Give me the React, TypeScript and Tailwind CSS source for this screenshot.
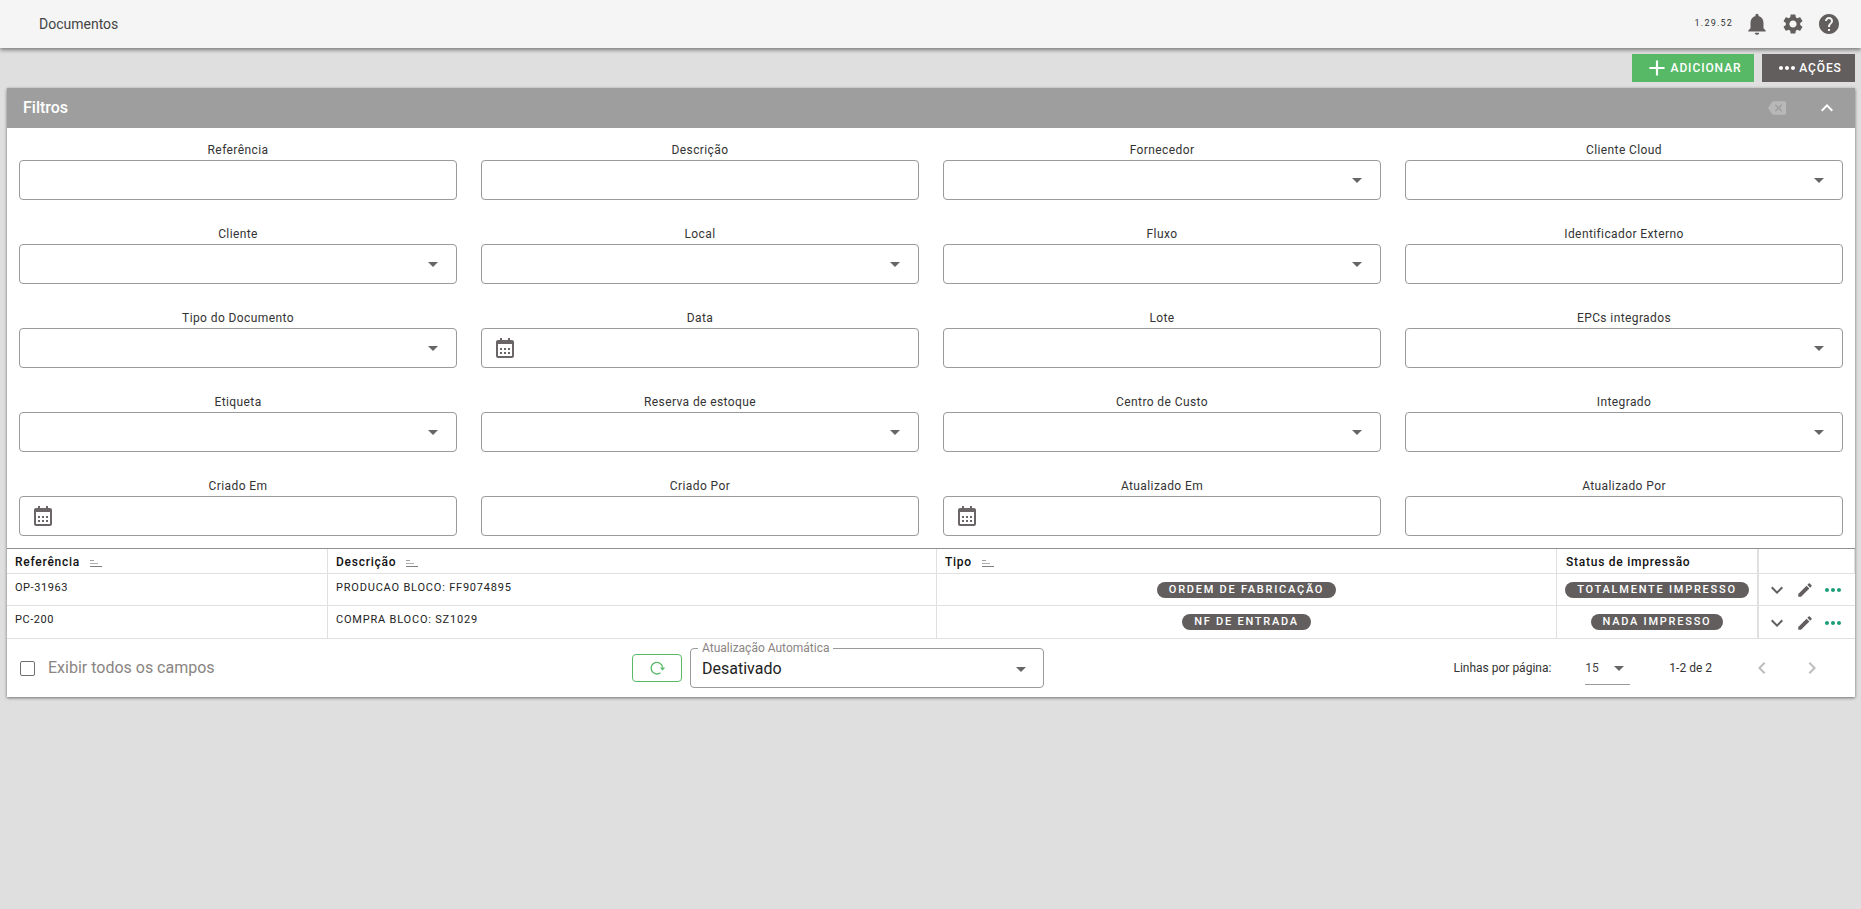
import React from "react";

const P = {
  bell: "M12 22c1.1 0 2-.9 2-2h-4c0 1.1.89 2 2 2zm6-6v-5c0-3.07-1.64-5.64-4.5-6.32V4c0-.83-.67-1.5-1.5-1.5s-1.5.67-1.5 1.5v.68C7.63 5.36 6 7.92 6 11v5l-2 2v1h16v-1l-2-2z",
  gear: "M19.14 12.94c.04-.3.06-.61.06-.94 0-.32-.02-.64-.07-.94l2.03-1.58c.18-.14.23-.41.12-.61l-1.92-3.32c-.12-.22-.37-.29-.59-.22l-2.39.96c-.5-.38-1.03-.7-1.62-.94l-.36-2.54c-.04-.24-.24-.41-.48-.41h-3.84c-.24 0-.43.17-.47.41l-.36 2.54c-.59.24-1.13.57-1.62.94l-2.39-.96c-.22-.08-.47 0-.59.22L2.74 8.87c-.12.21-.08.47.12.61l2.03 1.58c-.05.3-.09.63-.09.94s.02.64.07.94l-2.03 1.58c-.18.14-.23.41-.12.61l1.92 3.32c.12.22.37.29.59.22l2.39-.96c.5.38 1.03.7 1.62.94l.36 2.54c.05.24.24.41.48.41h3.84c.24 0 .44-.17.47-.41l.36-2.54c.59-.24 1.13-.56 1.62-.94l2.39.96c.22.08.47 0 .59-.22l1.92-3.32c.12-.22.07-.47-.12-.61l-2.01-1.58zM12 15.6c-1.98 0-3.6-1.62-3.6-3.6s1.62-3.6 3.6-3.6 3.6 1.62 3.6 3.6-1.62 3.6-3.6 3.6z",
  help: "M12 2C6.48 2 2 6.48 2 12s4.48 10 10 10 10-4.48 10-10S17.52 2 12 2zm1 17h-2v-2h2v2zm2.07-7.75l-.9.92C13.45 12.9 13 13.5 13 15h-2v-.5c0-1.1.45-2.1 1.17-2.83l1.24-1.26c.37-.36.59-.86.59-1.41 0-1.1-.9-2-2-2s-2 .9-2 2H8c0-2.21 1.79-4 4-4s4 1.79 4 4c0 .88-.36 1.68-.93 2.25z",
  plus: "M19 13h-6v6h-2v-6H5v-2h6V5h2v6h6v2z",
  more: "M6 10c-1.1 0-2 .9-2 2s.9 2 2 2 2-.9 2-2-.9-2-2-2zm12 0c-1.1 0-2 .9-2 2s.9 2 2 2 2-.9 2-2-.9-2-2-2zm-6 0c-1.1 0-2 .9-2 2s.9 2 2 2 2-.9 2-2-.9-2-2-2z",
  backspace: "M22 3H7c-.69 0-1.23.35-1.59.88L0 12l5.41 8.11c.36.53.9.89 1.59.89h15c1.1 0 2-.9 2-2V5c0-1.1-.9-2-2-2zm-3 12.59L17.59 17 14 13.41 10.41 17 9 15.59 12.59 12 9 8.41 10.41 7 14 10.59 17.59 7 19 8.41 15.41 12 19 15.59z",
  up: "M12 8l-6 6 1.41 1.41L12 10.83l4.59 4.58L18 14z",
  down: "M16.59 8.59L12 13.17 7.41 8.59 6 10l6 6 6-6z",
  left: "M15.41 7.41L14 6l-6 6 6 6 1.41-1.41L10.83 12z",
  right: "M10 6L8.59 7.41 13.17 12l-4.58 4.59L10 18l6-6z",
  edit: "M3 17.25V21h3.75L17.81 9.94l-3.75-3.75L3 17.25zM20.71 7.04c.39-.39.39-1.02 0-1.41l-2.34-2.34c-.39-.39-1.02-.39-1.41 0l-1.83 1.83 3.75 3.75 1.83-1.83z",
  caret: "M7 10l5 5 5-5z",
  calendar: "M7 12h2v2H7zm0 4h2v2H7zm4-4h2v2h-2zm0 4h2v2h-2zm4-4h2v2h-2zm0 4h2v2h-2zM5 22h14c1.103 0 2-.897 2-2V6c0-1.103-.897-2-2-2h-2V2h-2v2H9V2H7v2H5c-1.103 0-2 .897-2 2v14c0 1.103.897 2 2 2zM19 8l.001 12H5V8h14z",
};

function Icon({ d, className }: { d: string; className: string }) {
  return (
    <svg viewBox="0 0 24 24" className={className} fill="currentColor" aria-hidden="true">
      <path d={d} />
    </svg>
  );
}

type Field = { label: string; kind?: "select" | "date" };

const fields: Field[] = [
  { label: "Referência" },
  { label: "Descrição" },
  { label: "Fornecedor", kind: "select" },
  { label: "Cliente Cloud", kind: "select" },
  { label: "Cliente", kind: "select" },
  { label: "Local", kind: "select" },
  { label: "Fluxo", kind: "select" },
  { label: "Identificador Externo" },
  { label: "Tipo do Documento", kind: "select" },
  { label: "Data", kind: "date" },
  { label: "Lote" },
  { label: "EPCs integrados", kind: "select" },
  { label: "Etiqueta", kind: "select" },
  { label: "Reserva de estoque", kind: "select" },
  { label: "Centro de Custo", kind: "select" },
  { label: "Integrado", kind: "select" },
  { label: "Criado Em", kind: "date" },
  { label: "Criado Por" },
  { label: "Atualizado Em", kind: "date" },
  { label: "Atualizado Por" },
];

function FilterField({ label, kind }: Field) {
  return (
    <div className="flex flex-col h-[84px]">
      <div className="h-[20px] pt-[2px] text-center text-[12px] leading-[16px] tracking-[0.4px] text-[#333333]">{label}</div>
      <div className="h-[40px] rounded-[4px] border border-[#9a9a9a] bg-white flex items-center justify-between">
        {kind === "date" && <Icon d={P.calendar} className="ml-[11px] w-[24px] h-[24px] text-[#6b6567]" />}
        {kind === "select" && (
          <>
            <span />
            <Icon d={P.caret} className="mr-[11px] w-[24px] h-[24px] text-[#666666]" />
          </>
        )}
      </div>
    </div>
  );
}

function SortIcon() {
  return (
    <span className="ml-[10px] mt-[3px] flex flex-col gap-[2px] w-[12px]">
      <span className="block h-[1px] w-[4px] bg-[#a0a0a0]" />
      <span className="block h-[1px] w-[8px] bg-[#b0b0b0]" />
      <span className="block h-[1px] w-[12px] bg-[#808080]" />
    </span>
  );
}

function Badge({ children }: { children: React.ReactNode }) {
  return (
    <span className="inline-flex items-center h-[16px] rounded-full bg-[#625e5e] px-[12px] text-[11px] font-medium leading-[16px] tracking-[1.75px] text-white whitespace-nowrap">
      {children}
    </span>
  );
}

function Row({ ref_, desc, tipo, status, last }: { ref_: string; desc: string; tipo: string; status: string; last?: boolean }) {
  return (
    <div className={`flex border-b border-[#e0e0e0] ${last ? "h-[33px]" : "h-[32px]"}`}>
      <div className="w-[321px] shrink-0 border-r border-[#e0e0e0] pl-[8px] pt-[6px] text-[11px] leading-[16px] tracking-[0.55px] text-[#222222]">{ref_}</div>
      <div className="w-[609px] shrink-0 border-r border-[#e0e0e0] pl-[8px] pt-[6px] text-[11px] leading-[16px] tracking-[0.8px] text-[#222222]">{desc}</div>
      <div className="w-[620px] shrink-0 border-r border-[#e0e0e0] flex justify-center pt-[8px]"><Badge>{tipo}</Badge></div>
      <div className="w-[202px] shrink-0 border-r-2 border-[#e0e0e0] flex justify-center pt-[8px]"><Badge>{status}</Badge></div>
      <div className="flex-1 flex items-center pl-[4px] pt-[1px]">
        <span className="w-[28px] flex justify-center"><Icon d={P.down} className="w-[24px] h-[24px] shrink-0 text-[#625e5e]" /></span>
        <span className="w-[28px] flex justify-center"><Icon d={P.edit} className="w-[18px] h-[18px] shrink-0 text-[#625e5e]" /></span>
        <span className="w-[28px] flex justify-center"><Icon d={P.more} className="w-[24px] h-[24px] shrink-0 text-[#1e9e78]" /></span>
      </div>
    </div>
  );
}

export default function App() {
  return (
    <div className="min-h-[909px] bg-[#dfdfdf] font-['Roboto',sans-serif]">
      <header className="h-[48px] bg-[#f5f5f5] shadow-[0_2px_4px_rgba(0,0,0,0.45)] flex items-center justify-between pl-[39px] pr-[20px]">
        <span className="text-[14px] text-[#444444]">Documentos</span>
        <div className="flex items-center">
          <span className="mr-[11px] text-[9px] tracking-[1.2px] text-[#333333]">1.29.52</span>
          <Icon d={P.bell} className="w-[26px] h-[26px] text-[#625e5e]" />
          <Icon d={P.gear} className="ml-[11px] w-[24px] h-[24px] text-[#625e5e]" />
          <Icon d={P.help} className="ml-[12px] w-[24px] h-[24px] text-[#625e5e]" />
        </div>
      </header>

      <div className="flex justify-end gap-[8px] pt-[6px] pr-[6px] h-[40px]">
        <button className="w-[122px] h-[28px] bg-[#57b966] text-white flex items-center justify-center text-[12px] font-medium tracking-[0.9px]">
          <Icon d={P.plus} className="w-[26px] h-[26px] -ml-[1px] mr-[1px]" />
          ADICIONAR
        </button>
        <button className="w-[93px] h-[28px] bg-[#625e5e] text-white flex items-center justify-center text-[12px] font-medium tracking-[0.9px]">
          <Icon d={P.more} className="w-[24px] h-[24px]" />
          AÇÕES
        </button>
      </div>

      <main className="ml-[7px] mr-[6px] bg-white shadow-[0_1px_3px_rgba(0,0,0,0.5)]">
        <div className="h-[40px] bg-[#9e9e9e] flex items-center justify-between pl-[16px] pr-[16px]">
          <span className="text-[16px] font-medium text-white">Filtros</span>
          <div className="flex items-center">
            <Icon d={P.backspace} className="w-[18px] h-[18px] text-[#b8b8b8]" />
            <Icon d={P.up} className="ml-[29px] w-[24px] h-[24px] text-white" />
          </div>
        </div>

        <div className="grid grid-cols-4 gap-x-[24px] px-[12px] pt-[12px] h-[420px]">
          {fields.map((f) => (
            <FilterField key={f.label} {...f} />
          ))}
        </div>

        <div className="border-t border-[#8f8f8f] h-[26px] flex border-b border-b-[#e0e0e0] text-[12px] font-medium tracking-[0.75px] text-[#111111]">
          <div className="w-[321px] shrink-0 border-r border-[#e0e0e0] pl-[8px] pt-[1px] flex items-center">Referência<SortIcon /></div>
          <div className="w-[609px] shrink-0 border-r border-[#e0e0e0] pl-[8px] pt-[1px] flex items-center">Descrição<SortIcon /></div>
          <div className="w-[620px] shrink-0 border-r border-[#e0e0e0] pl-[8px] pt-[1px] flex items-center">Tipo<SortIcon /></div>
          <div className="w-[202px] shrink-0 border-r-2 border-[#e0e0e0] pl-[9px] pt-[1px] flex items-center">Status de impressão</div>
          <div className="flex-1 border-r border-[#e0e0e0]" />
        </div>
        <Row ref_="OP-31963" desc="PRODUCAO BLOCO: FF9074895" tipo="ORDEM DE FABRICAÇÃO" status="TOTALMENTE IMPRESSO" />
        <Row ref_="PC-200" desc="COMPRA BLOCO: SZ1029" tipo="NF DE ENTRADA" status="NADA IMPRESSO" last />

        <footer className="h-[58px] flex items-center">
          <label className="flex items-center pl-[13px] w-[625px] shrink-0">
            <span className="w-[15px] h-[15px] rounded-[2px] border-[1.5px] border-[#6f6f73] bg-white" />
            <span className="ml-[13px] text-[16px] text-[#8a8582]">Exibir todos os campos</span>
          </label>
          <button className="h-[28px] w-[50px] rounded-[4px] border border-[#57b966] flex items-center justify-center">
            <svg viewBox="0 0 16 16" className="w-[16px] h-[16px] text-[#57b966]" fill="none" aria-hidden="true">
              <path d="M13.6 7.2A5.8 5.8 0 1 0 11.4 12.8" stroke="currentColor" strokeWidth="1.3" />
              <path d="M10.9 7.6h5.2l-2.6 2.8z" fill="currentColor" />
            </svg>
          </button>
          <div className="relative ml-[8px] h-[40px] w-[354px] rounded-[4px] border border-[#9a9a9a] flex items-center justify-between pl-[11px] pr-[10px] pt-[1px]">
            <span className="text-[16px] text-[#222222]">Desativado</span>
            <Icon d={P.caret} className="w-[24px] h-[24px] text-[#666666]" />
            <span className="absolute left-[7px] top-[-7px] bg-white px-[4px] text-[12px] leading-[12px] text-[#8a8582]">Atualização Automática</span>
          </div>
          <div className="flex items-center ml-auto text-[12px] text-[#333333]">
            <span>Linhas por página:</span>
            <div className="ml-[34px] w-[45px] h-[34px] border-b border-[#9a9a9a] flex items-center justify-between text-[#444444]">
              <span>15</span>
              <Icon d={P.caret} className="w-[24px] h-[24px] -mr-[1px] text-[#666666]" />
            </div>
            <span className="ml-[39px]">1-2 de 2</span>
            <Icon d={P.left} className="ml-[38px] w-[24px] h-[24px] text-[#bdbdbd]" />
            <Icon d={P.right} className="ml-[26px] mr-[31px] w-[24px] h-[24px] text-[#bdbdbd]" />
          </div>
        </footer>
      </main>
    </div>
  );
}
